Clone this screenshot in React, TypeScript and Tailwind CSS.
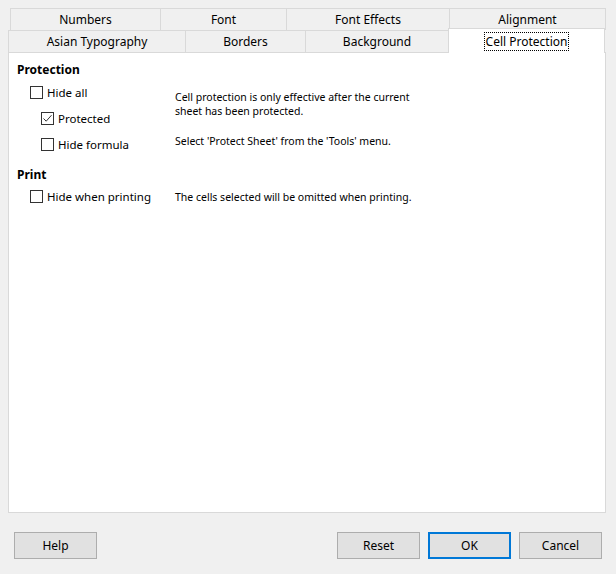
import React from "react";

const FONT = { fontFamily: '"Noto Sans", "Open Sans", sans-serif' };

function Tab({ label, w }: { label: string; w: string }) {
  return (
    <div className={`${w} h-[22px] flex items-center justify-center border-t border-l border-[#d9d9d9] bg-[#f0f0f0] text-[12px] text-black`}>
      <span className="pt-[1px]">{label}</span>
    </div>
  );
}

function CheckBox({ checked }: { checked?: boolean }) {
  return (
    <span className="w-[13px] h-[13px] border border-[#333333] bg-white flex items-center justify-center shrink-0">
      {checked && (
        <svg width="11" height="11" viewBox="0 0 11 11">
          <path d="M1.5 5.5 L4.2 8.2 L9.5 2.2" fill="none" stroke="#333" strokeWidth="1" />
        </svg>
      )}
    </span>
  );
}

function CheckRow({ label, checked, indent }: { label: string; checked?: boolean; indent?: boolean }) {
  return (
    <div className={`h-[26px] flex items-center gap-[4px] ${indent ? "pl-[11px]" : ""}`}>
      <CheckBox checked={checked} />
      <span className="text-[11.5px] leading-[16px] pt-[2px]">{label}</span>
    </div>
  );
}

function Btn({ label, primary }: { label: string; primary?: boolean }) {
  return (
    <button
      className={`w-[83px] h-[27px] bg-[#e1e1e1] text-[12px] text-black flex items-center justify-center pt-[1px] ${
        primary ? "border-2 border-[#0078d7]" : "border border-[#adadad]"
      }`}
    >
      {label}
    </button>
  );
}

export default function App() {
  return (
    <div className="w-[616px] h-[574px] bg-[#f0f0f0] overflow-hidden text-black" style={FONT}>
      <div className="pl-[8px] pr-[10px] pt-[8px]">
        {/* tab row 1 */}
        <div className="flex pl-[2px]">
          <Tab label="Numbers" w="w-[150px]" />
          <Tab label="Font" w="w-[126px]" />
          <Tab label="Font Effects" w="w-[163px]" />
          <div className="w-[157px] h-[22px] flex items-center justify-center border-t border-l border-r border-[#d9d9d9] bg-[#f0f0f0] text-[12px]">
            <span className="pt-[1px]">Alignment</span>
          </div>
        </div>
        {/* tab row 2 */}
        <div className="flex items-start h-[22px]">
          <Tab label="Asian Typography" w="w-[177px]" />
          <Tab label="Borders" w="w-[120px]" />
          <Tab label="Background" w="w-[143px]" />
          <div className="relative z-10 -mt-[2px] w-[157px] h-[25px] border-t border-l border-r border-[#d9d9d9] bg-white flex items-center justify-center text-[12px]">
            <span className="outline outline-1 outline-dotted outline-black px-[1px] leading-[17px] mt-[1px]">
              Cell Protection
            </span>
          </div>
        </div>

        {/* panel */}
        <div className="h-[461px] border border-[#d9d9d9] bg-white pl-[8px] pt-[8px]">
          <div className="font-bold text-[12px] leading-[16px] pt-[1px]">Protection</div>
          <div className="flex mt-[1px]">
            <div className="w-[158px] pl-[13px]">
              <CheckRow label="Hide all" />
              <CheckRow label="Protected" checked indent />
              <CheckRow label="Hide formula" indent />
            </div>
            <div className="text-[10.5px] leading-[14px] pt-[11px]">
              <div>Cell protection is only effective after the current</div>
              <div>sheet has been protected.</div>
              <div className="mt-[16px]">Select 'Protect Sheet' from the 'Tools' menu.</div>
            </div>
          </div>
          <div className="font-bold text-[12px] leading-[16px] mt-[9px] pt-[1px]">Print</div>
          <div className="flex items-center">
            <div className="w-[158px] pl-[13px]">
              <CheckRow label="Hide when printing" />
            </div>
            <div className="text-[10.5px] leading-[14px] mt-[1px]">
              The cells selected will be omitted when printing.
            </div>
          </div>
        </div>
      </div>

      {/* footer */}
      <div className="flex justify-between px-[14px] mt-[19px]">
        <Btn label="Help" />
        <div className="flex gap-[8px]">
          <Btn label="Reset" />
          <Btn label="OK" primary />
          <Btn label="Cancel" />
        </div>
      </div>
    </div>
  );
}
